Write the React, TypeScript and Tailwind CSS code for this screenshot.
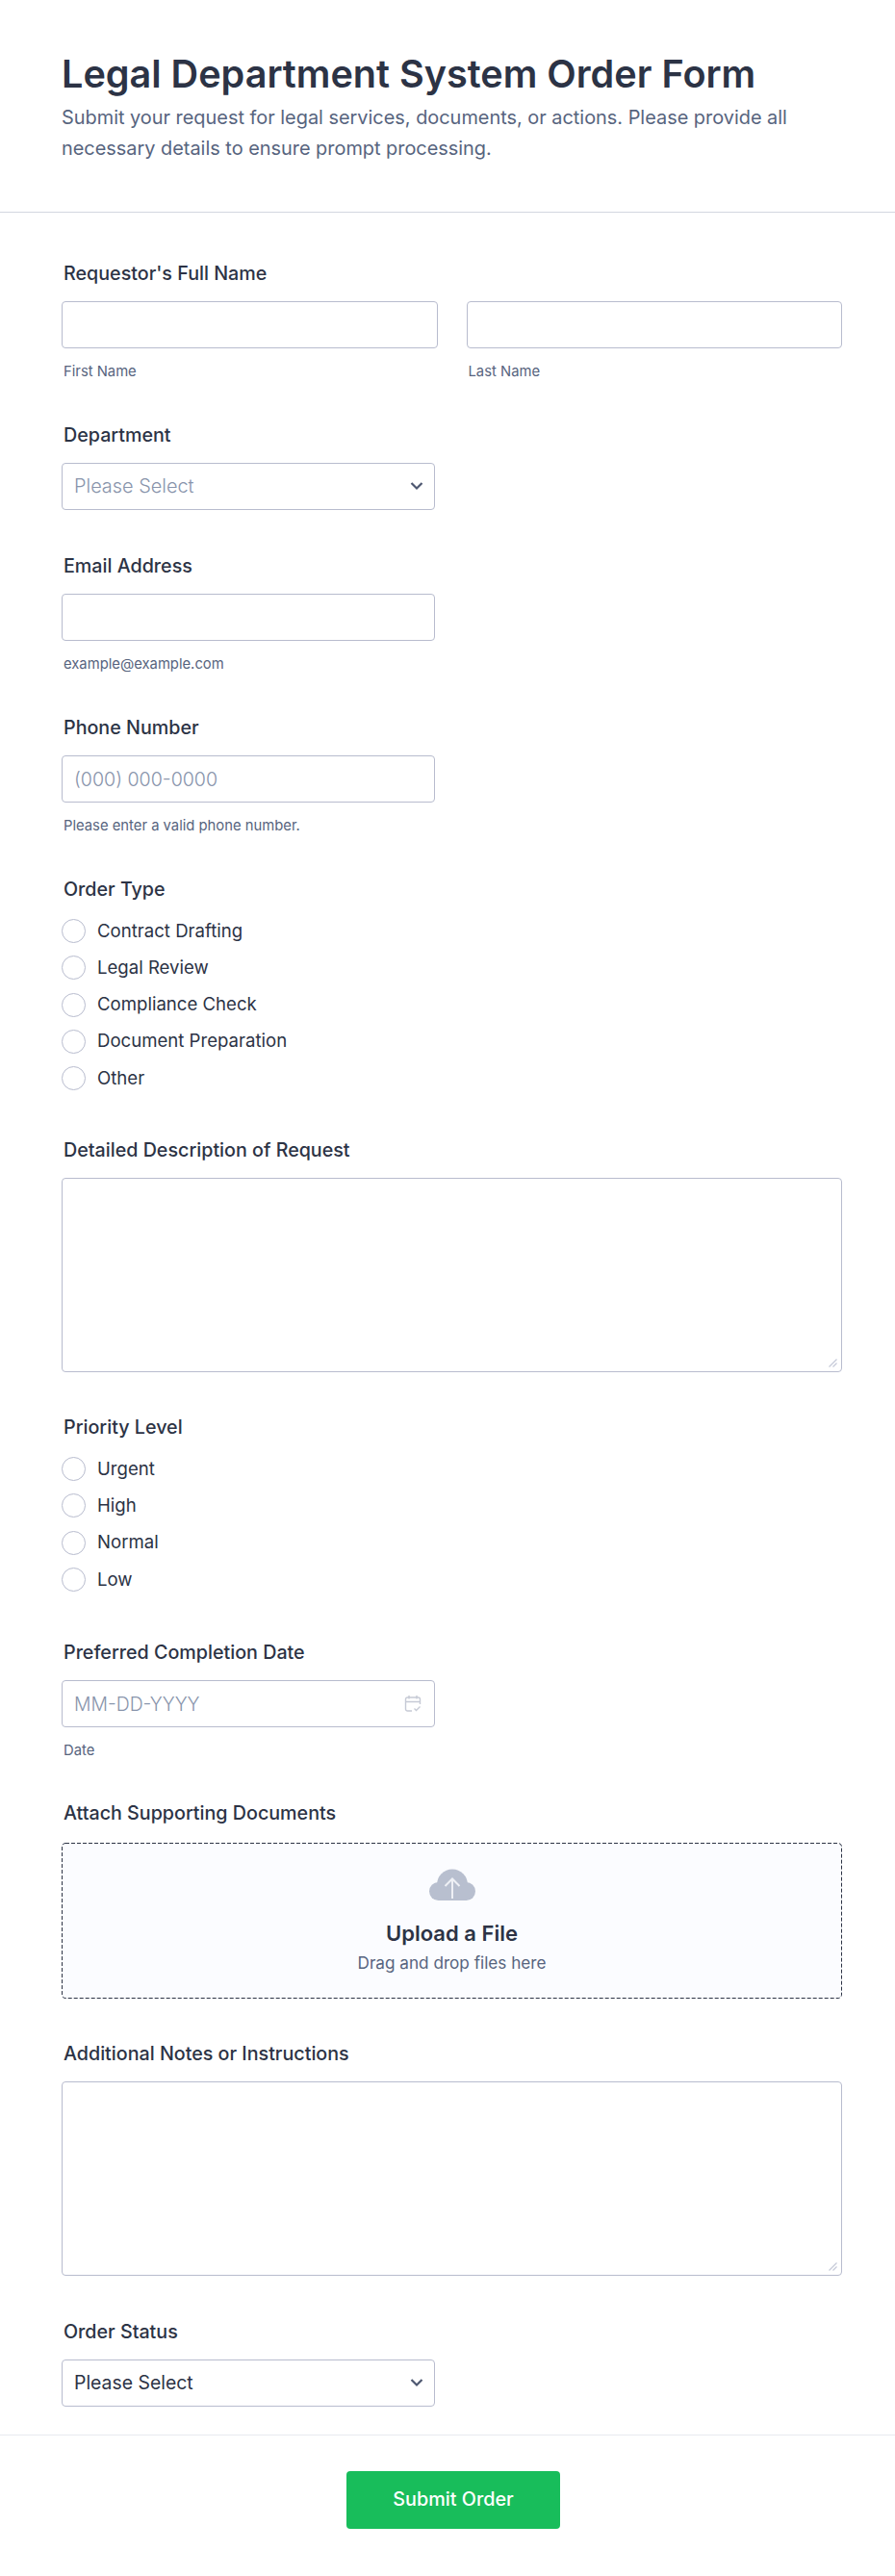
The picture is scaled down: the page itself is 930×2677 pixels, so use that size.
import React from "react";

const box = "block w-full h-[49px] rounded-[4px] border border-[#b8bcce] bg-white px-3 text-[#2c3345] placeholder:text-[#8894ab] placeholder:font-light outline-none";

function Label({ children, className = "" }: { children: React.ReactNode; className?: string }) {
  return <label className={`block h-6 px-[2px] text-[19.7px] leading-6 font-medium text-[#2c3345] ${className}`}>{children}</label>;
}

function Sub({ children }: { children: React.ReactNode }) {
  return <p className="mt-[14px] h-5 px-[2px] text-[14.8px] leading-5 text-[#57647e]">{children}</p>;
}

function Chevron() {
  return (
    <svg className="pointer-events-none absolute right-[12px] top-[19px]" width="14" height="10" viewBox="0 0 14 10" fill="none">
      <path d="M1.5 2 L7 7.5 L12.5 2" stroke="#4d5770" strokeWidth="2.2" />
    </svg>
  );
}

function Select({ muted }: { muted?: boolean }) {
  return (
    <div className="relative w-[388px]">
      <select className={`${box} appearance-none ${muted ? "!text-[#8894ab] text-[19.9px] font-light" : "text-[19.4px]"}`} defaultValue="">
        <option value="">Please Select</option>
      </select>
      <Chevron />
    </div>
  );
}

function Radios({ items, name }: { items: string[]; name: string }) {
  return (
    <div className="mt-[19px] flex flex-col gap-[13.3px]">
      {items.map((t) => (
        <label key={t} className="flex h-[25px] items-center gap-[12px] text-[18.6px] text-[#2c3345]">
          <input type="radio" name={name} className="size-[25px] appearance-none rounded-full border border-[#b8bcce] bg-white" />
          <span>{t}</span>
        </label>
      ))}
    </div>
  );
}

function Area() {
  return (
    <div className="relative w-[811px]">
      <textarea className="block h-[202px] w-full resize-none rounded-[4px] border border-[#b8bcce] bg-white outline-none" />
      <svg className="pointer-events-none absolute right-[5px] bottom-[5px]" width="9" height="9" viewBox="0 0 9 9" fill="none" stroke="#c5c9d8" strokeWidth="1.2">
        <path d="M0.5 8.500 L8.500 0.500 M4.500 8.500 L8.500 4.500" />
      </svg>
    </div>
  );
}

export default function App() {
  return (
    <div className="h-[2677px] w-[930px] bg-white font-['Inter',sans-serif]">
      <header className="h-[221px] border-b border-[#d3d6e0] px-16 pt-[52px]">
        <h1 className="text-[39.6px] leading-[50px] font-semibold text-[#2c3345]">Legal Department System Order Form</h1>
        <p className="mt-[4px] text-[19.9px] leading-8 text-[#57647e]">
          Submit your request for legal services, documents, or actions. Please provide all necessary details to ensure prompt processing.
        </p>
      </header>

      <main className="h-[2310px] border-b border-[#e8eaf0] px-16 pt-[51px]">
        <section>
          <Label className="mb-[17px]">Requestor's Full Name</Label>
          <div className="grid w-[811px] grid-cols-2 gap-[30px]">
            <div>
              <input className={box} />
              <Sub>First Name</Sub>
            </div>
            <div>
              <input className={box} />
              <Sub>Last Name</Sub>
            </div>
          </div>
        </section>

        <section className="mt-[44px]">
          <Label className="mb-[17px]">Department</Label>
          <Select muted />
        </section>

        <section className="mt-[46px]">
          <Label className="mb-[17px]">Email Address</Label>
          <input className={`${box} !w-[388px]`} />
          <Sub>example@example.com</Sub>
        </section>

        <section className="mt-[44px]">
          <Label className="mb-[17px]">Phone Number</Label>
          <input className={`${box} !w-[388px] text-[19.6px]`} placeholder="(000) 000-0000" />
          <Sub>Please enter a valid phone number.</Sub>
        </section>

        <section className="mt-[44px]">
          <Label>Order Type</Label>
          <Radios name="type" items={["Contract Drafting", "Legal Review", "Compliance Check", "Document Preparation", "Other"]} />
        </section>

        <section className="mt-[50px]">
          <Label className="mb-[17px]">Detailed Description of Request</Label>
          <Area />
        </section>

        <section className="mt-[45px]">
          <Label>Priority Level</Label>
          <Radios name="priority" items={["Urgent", "High", "Normal", "Low"]} />
        </section>

        <section className="mt-[51px]">
          <Label className="mb-[17px]">Preferred Completion Date</Label>
          <div className="relative w-[388px]">
            <input className={`${box} text-[19.4px]`} placeholder="MM-DD-YYYY" />
            <svg className="pointer-events-none absolute right-[14px] top-[15px]" width="18" height="19" viewBox="0 0 18 19" fill="none" stroke="#c6cad5" strokeWidth="1.4">
              <path d="M8 17 H3.500 A2 2 0 0 1 1.500 15 V5 A2 2 0 0 1 3.500 3 H14.500 A2 2 0 0 1 16.500 5 V10" />
              <path d="M1.500 7.500 H16.500 M5 1 V4.500 M13 1 V4.500" />
              <path d="M10.500 14.500 L12.500 16.500 L16.500 12.500" />
            </svg>
          </div>
          <Sub>Date</Sub>
        </section>

        <section className="mt-[43px]">
          <Label className="mb-[19px]">Attach Supporting Documents</Label>
          <div className="relative flex h-[162px] w-[811px] flex-col items-center rounded-[4px] bg-[#fbfcff] pt-[27px]">
            <svg className="pointer-events-none absolute inset-0" width="811" height="162" fill="none">
              <rect x="0.5" y="0.5" width="810" height="161" rx="3.500" stroke="#2c3345" strokeDasharray="4 2" />
            </svg>
            <svg width="48" height="33" viewBox="0 0 48 33">
              <g fill="#b8bfcf">
                <circle cx="24" cy="16.500" r="16" />
                <circle cx="9.500" cy="23.500" r="9.500" />
                <circle cx="38.500" cy="23.500" r="9.500" />
                <rect x="9.500" y="20" width="29" height="13" />
              </g>
              <path d="M24 31 V10.500 M16.500 18 L24 10.500 L31.500 18" fill="none" stroke="#eef0f5" strokeWidth="2" />
            </svg>
            <div className="mt-[20px] text-[22px] leading-7 font-semibold text-[#2c3345]">Upload a File</div>
            <div className="mt-[5px] text-[17.15px] leading-6 text-[#57647e]">Drag and drop files here</div>
          </div>
        </section>

        <section className="mt-[45px]">
          <Label className="mb-[17px]">Additional Notes or Instructions</Label>
          <Area />
        </section>

        <section className="mt-[46px]">
          <Label className="mb-[17px]">Order Status</Label>
          <Select />
        </section>
      </main>

      <footer className="flex justify-center pt-[37px] pl-[12px]">
        <button className="h-[60px] w-[222px] rounded-[4px] bg-[#18bd5b] text-[19.8px] font-medium text-white">Submit Order</button>
      </footer>
    </div>
  );
}
